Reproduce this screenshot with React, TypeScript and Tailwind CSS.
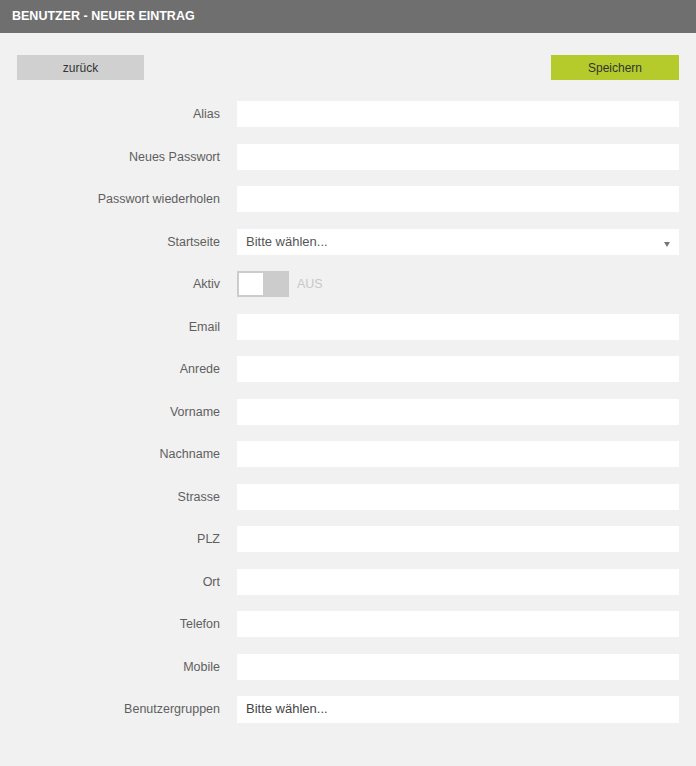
import React from "react";

const fields = [
  { label: "Alias", type: "text" },
  { label: "Neues Passwort", type: "text" },
  { label: "Passwort wiederholen", type: "text" },
  { label: "Startseite", type: "select" },
  { label: "Aktiv", type: "toggle" },
  { label: "Email", type: "text" },
  { label: "Anrede", type: "text" },
  { label: "Vorname", type: "text" },
  { label: "Nachname", type: "text" },
  { label: "Strasse", type: "text" },
  { label: "PLZ", type: "text" },
  { label: "Ort", type: "text" },
  { label: "Telefon", type: "text" },
  { label: "Mobile", type: "text" },
  { label: "Benutzergruppen", type: "multi" },
];

function Control({ type }: { type: string }) {
  if (type === "toggle") {
    return (
      <div className="flex items-center h-[26px]">
        <div className="w-[52px] h-[26px] bg-[#cccccc] p-[2px] flex">
          <div className="w-[24px] h-full bg-white" />
        </div>
        <span className="ml-[8px] text-[12.5px] text-[#c8c8c8]">AUS</span>
      </div>
    );
  }
  if (type === "select") {
    return (
      <div className="flex-1 h-[26px] bg-white flex items-center pl-[9px] pr-[8px] relative">
        <span className="text-[13px] text-[#555555]">Bitte wählen...</span>
        <span className="absolute right-[9px] top-[13px] w-0 h-0 border-l-[3px] border-r-[3px] border-t-[5px] border-l-transparent border-r-transparent border-t-[#777777]" />
      </div>
    );
  }
  if (type === "multi") {
    return (
      <div className="flex-1 h-[27px] bg-white flex items-center pl-[9px]">
        <span className="text-[13px] text-[#444444]">Bitte wählen...</span>
      </div>
    );
  }
  return <div className="flex-1 h-[26px] bg-white" />;
}

export default function App() {
  return (
    <div
      className="w-[696px] h-[766px] bg-[#f1f1f1] overflow-hidden"
      style={{ fontFamily: "Arial, 'Liberation Sans', sans-serif" }}
    >
      <div className="h-[33px] bg-[#6f6f6f] flex items-center pl-[12px]">
        <span className="text-white font-bold text-[12.5px]">BENUTZER - NEUER EINTRAG</span>
      </div>
      <div className="px-[17px] pt-[22px]">
        <div className="flex justify-between">
          <button className="w-[127px] h-[25px] bg-[#d0d0d0] text-[12px] text-[#333333] flex items-center justify-center">
            zurück
          </button>
          <button className="w-[128px] h-[25px] bg-[#b4cb2b] text-[12px] text-[#333333] flex items-center justify-center">
            Speichern
          </button>
        </div>
        <div className="mt-[21px] flex flex-col gap-[16.5px]">
          {fields.map((f) => (
            <div key={f.label} className="flex items-center h-[26px]">
              <div className="w-[203px] text-right text-[12.5px] leading-[14px] text-[#5f5f5f]">{f.label}</div>
              <div className="ml-[17px] flex-1 flex">
                <Control type={f.type} />
              </div>
            </div>
          ))}
        </div>
      </div>
    </div>
  );
}
